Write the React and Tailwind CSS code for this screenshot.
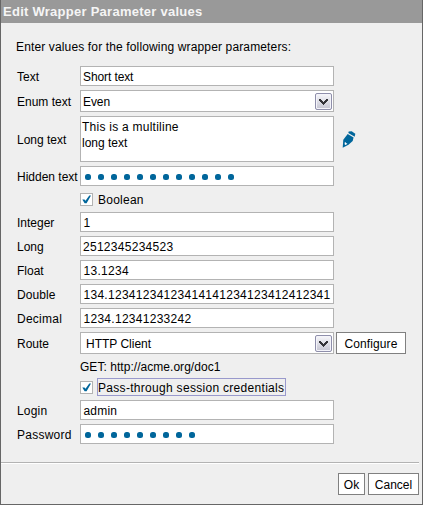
const FIELD = "w-[254px] shrink-0 border border-[#b3b3b3] bg-white whitespace-pre overflow-hidden";

function Row({ label, spacing = "", children }) {
  return (
    <div className="flex items-center">
      <label className={`w-16 shrink-0 pt-[2px] pl-px whitespace-nowrap ${spacing}`}>{label}</label>
      {children}
    </div>
  );
}

function TextField({ value, spacing = "tracking-[0.28px]", pad = "pl-[2.5px]" }) {
  return <div className={`${FIELD} h-5 pt-[2px] ${pad} ${spacing}`}>{value}</div>;
}

function Select({ value, pad, spacing = "" }) {
  return (
    <div className={`${FIELD} flex h-[22px] items-center justify-between pr-px ${pad}`}>
      <span className={`pt-[2px] ${spacing}`}>{value}</span>
      <span className="mt-px flex h-[17px] w-[17px] items-center justify-center rounded-[2px] border border-[#8f8fab] bg-linear-to-b from-[#f7f7fa] to-[#c5c5d2] shadow-[inset_0_0_0_1px_#f4f4fa]">
        <svg width="9" height="6" viewBox="0 0 9 6" shapeRendering="crispEdges" fill="#333338">
          <path d="M0 0h2v1h1v1h1v1h1v-1h1v-1h1v-1h2v2h-1v1h-1v1h-1v1h-1v1h-1v-1h-1v-1h-1v-1h-1v-1h-1z" />
        </svg>
      </span>
    </div>
  );
}

function PasswordField({ count }) {
  return (
    <div className={`${FIELD} flex h-5 items-center gap-[7px] pt-[2px] pl-1`}>
      {Array.from({ length: count }, (_, i) => (
        <svg key={i} width="6" height="6" viewBox="0 0 6 6" className="shrink-0">
          <rect x="0" y="0" width="6" height="6" rx="2.5" fill="#00669b" />
        </svg>
      ))}
    </div>
  );
}

function Checkbox() {
  return (
    <span className="flex h-[13px] w-[13px] shrink-0 items-center justify-center border border-[#b3b3b3] bg-white">
      <svg width="9" height="9" viewBox="0 0 9 9" fill="#00669b">
        <path d="M0.3 4.4h2.2l1 1.4L7.3 0.4H9L4.6 8.3H2.6z" />
      </svg>
    </span>
  );
}

function Button({ children, className }) {
  return (
    <button className={`flex h-[22px] items-center justify-center border border-[#808080] bg-white pt-[2px] whitespace-nowrap ${className}`}>
      {children}
    </button>
  );
}

function Pencil() {
  return (
    <svg width="14" height="17" viewBox="0 0 14 17" className="ml-2 shrink-0">
      <path d="M6.7 0.5L9.7 0.3 13.3 2.8 12.7 5.7 6.3 1.9z" fill="#00669b" />
      <path d="M5.7 3L11.6 6.5 10.7 9.9 6.5 13.7 0.7 16.7 1.3 8.8z" fill="#00669b" />
      <path d="M2.8 11.2h0.9l0.4 1.1h1.1l-0.1 0.8-1.6 0.8-0.9-0.6z" fill="#fff" />
    </svg>
  );
}

export default function App() {
  return (
    <div className="flex h-[505px] w-[423px] flex-col border-r border-b border-l border-[#666] bg-[#efefef] font-['Liberation_Sans',Arial,sans-serif] text-[12px] leading-4 text-black">
      <header className="h-[23px] shrink-0 bg-[#999] pl-[2px] text-[13px] leading-[23px] font-bold tracking-[0.26px] text-[#f5f5f5]">
        Edit Wrapper Parameter values
      </header>
      <main className="flex h-[439px] shrink-0 flex-col gap-1 pl-[15px]">
        <p className="mt-4 h-[23px] tracking-[0.14px]">Enter values for the following wrapper parameters:</p>
        <Row label="Text"><TextField value="Short text" pad="pl-[2px]" spacing="tracking-[-0.1px]" /></Row>
        <Row label="Enum text"><Select value="Even" pad="pl-[2px]" spacing="tracking-[-0.1px]" /></Row>
        <Row label="Long text">
          <div className={`${FIELD} h-[46px] pt-[2px] pl-px`}>
            <span className="block tracking-[0.25px]">This is a multiline</span>
            <span className="block">long text</span>
          </div>
          <Pencil />
        </Row>
        <Row label="Hidden text"><PasswordField count={12} /></Row>
        <div className="flex h-[18px] items-center pl-16">
          <Checkbox />
          <span className="ml-[5px] pt-[2px] tracking-[0.25px]">Boolean</span>
        </div>
        <Row label="Integer"><TextField value="1" /></Row>
        <Row label="Long"><TextField value="2512345234523" pad="pl-[2px]" /></Row>
        <Row label="Float"><TextField value="13.1234" /></Row>
        <Row label="Double" spacing="tracking-[0.1px]"><TextField value="134.12341234123414141234123412412341" /></Row>
        <Row label="Decimal" spacing="tracking-[0.25px]"><TextField value="1234.12341233242" /></Row>
        <Row label="Route">
          <Select value="HTTP Client" pad="pl-[5px]" />
          <Button className="ml-[2px] w-[70px] tracking-[0.1px]">Configure</Button>
        </Row>
        <div className="h-4 pt-px pl-16 tracking-[0.04px]">GET: http://acme.org/doc1</div>
        <div className="flex h-[18px] items-center pl-16">
          <Checkbox />
          <span className="ml-1 flex h-[18px] w-[189px] items-center border border-[#9999cc] pt-[2px] tracking-[0.3px] whitespace-nowrap">Pass-through session credentials</span>
        </div>
        <Row label="Login" spacing="tracking-[0.2px]"><TextField value="admin" spacing="tracking-[0.2px]" /></Row>
        <Row label="Password" spacing="tracking-[0.25px]"><PasswordField count={9} /></Row>
      </main>
      <footer className="mr-[3px] flex grow justify-end gap-[3px] border-t border-[#b3b3b3] pt-[10px] shadow-[inset_0_1px_0_#fff]">
        <Button className="w-[27px]">Ok</Button>
        <Button className="w-[51px]">Cancel</Button>
      </footer>
    </div>
  );
}
